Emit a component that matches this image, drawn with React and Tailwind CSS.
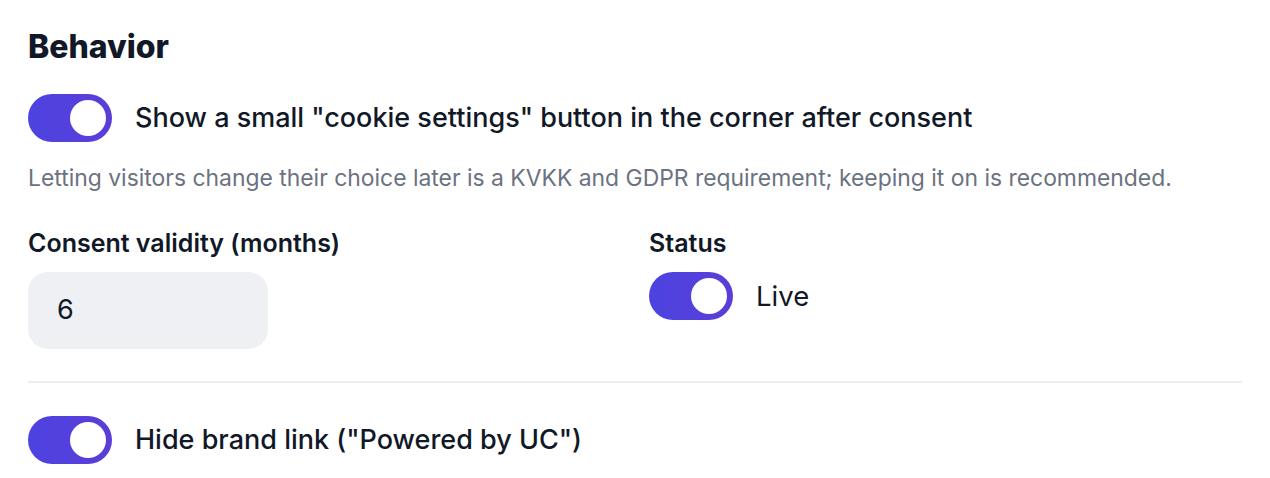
import React from "react";

function Toggle({ className = "" }) {
  return (
    <div
      className={`relative flex h-[48px] w-[84px] shrink-0 items-center rounded-full bg-gradient-to-r from-[#4c43e0] to-[#5b3dd8] ${className}`}
    >
      <div className="absolute right-[6px] h-[36px] w-[36px] rounded-full bg-white" />
    </div>
  );
}

export default function App() {
  return (
    <div
      className="min-h-[478px] w-[1270px] bg-white px-[28px] pt-[28px] text-[#111827]"
      style={{ fontFamily: "Inter, 'Noto Sans', sans-serif" }}
    >
      <h2 className="text-[32px] font-extrabold leading-[38px]">Behavior</h2>

      <div className="mt-[28px] flex items-center gap-[23px]">
        <Toggle />
        <span className="text-[27px] font-medium leading-[36px]">
          Show a small "cookie settings" button in the corner after consent
        </span>
      </div>

      <p className="mt-[22px] text-[22.9px] leading-[28px] text-[#6b7280]">
        Letting visitors change their choice later is a KVKK and GDPR requirement; keeping it on is recommended.
      </p>

      <div className="mt-[36px] grid grid-cols-2 gap-x-[28px]">
        <div className="flex flex-col">
          <label className="text-[25px] font-semibold leading-[30px]">Consent validity (months)</label>
          <div className="mt-[14px] flex h-[77px] w-[240px] items-center rounded-[20px] bg-[#eef0f3] px-[29px] text-[27px] text-[#111827]">
            6
          </div>
        </div>
        <div className="flex flex-col">
          <label className="text-[25px] font-semibold leading-[30px]">Status</label>
          <div className="mt-[14px] flex items-center gap-[23px]">
            <Toggle />
            <span className="text-[27.5px] leading-[36px]">Live</span>
          </div>
        </div>
      </div>

      <div className="mt-[32px] h-[2px] w-full bg-[#eceef1]" />

      <div className="mt-[33px] flex items-center gap-[23px]">
        <Toggle />
        <span className="text-[27px] font-medium leading-[36px]">Hide brand link ("Powered by UC")</span>
      </div>
    </div>
  );
}
